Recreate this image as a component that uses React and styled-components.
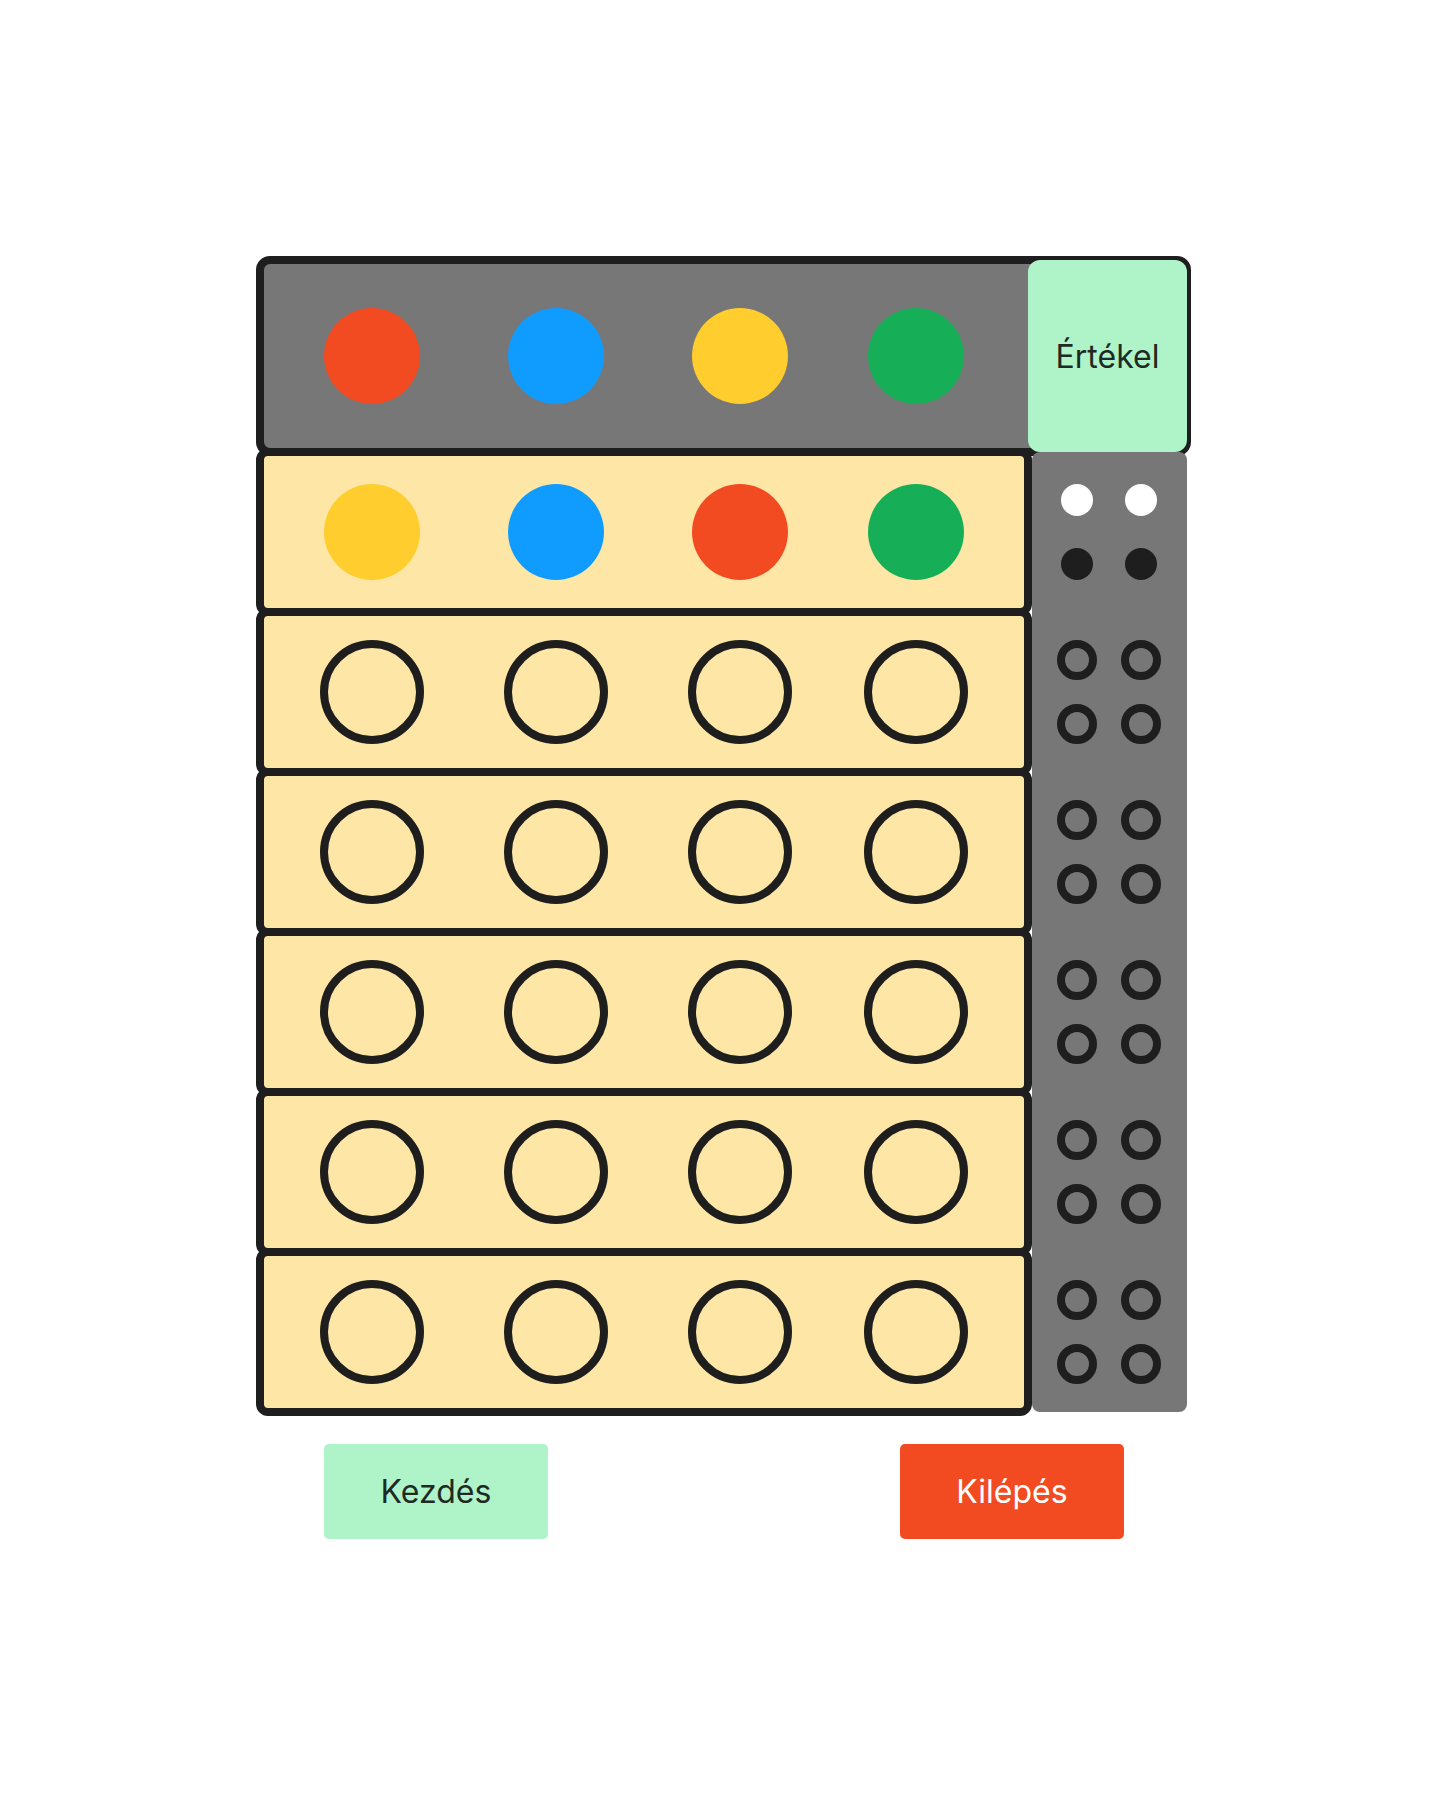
import React from 'react';
import styled, { createGlobalStyle } from 'styled-components';

const Global = createGlobalStyle`
  html, body { margin: 0; padding: 0; background: #ffffff; }
  body { font-family: Inter, "Noto Sans", "Liberation Sans", sans-serif; }
`;

const INK = '#1e1e1e';
const GRAY = '#777777';
const CREAM = '#fee7a6';
const MINT = '#aff4c8';

const Page = styled.div`
  display: flex;
  flex-direction: column;
  align-items: flex-start;
  padding: 256px 0 0 256px;
  min-height: 1796px;
  box-sizing: border-box;
`;

const Board = styled.div`
  width: 935px;
  display: flex;
  flex-direction: column;
`;

const TopBar = styled.div`
  height: 200px;
  box-sizing: border-box;
  border: 8px solid ${INK};
  border-radius: 14px;
  background: ${GRAY};
  display: flex;
  align-items: center;
`;

const PegRow = styled.div`
  display: grid;
  grid-template-columns: 184px 184px 176px 104px;
  padding-left: 56px;
  align-items: center;
`;

const Slot = styled.div`
  width: 104px;
  height: 104px;
  display: flex;
  align-items: center;
  justify-content: center;
`;

const CodePeg = styled.div`
  width: 96px;
  height: 96px;
  border-radius: 50%;
  background: ${(p) => p.$color};
`;

const EmptyPeg = styled.div`
  width: 104px;
  height: 104px;
  box-sizing: border-box;
  border: 8px solid ${INK};
  border-radius: 50%;
`;

const EvalButton = styled.button`
  align-self: stretch;
  margin: -4px -4px -4px auto;
  width: 159px;
  border: none;
  border-radius: 12px;
  background: ${MINT};
  color: #1f2a24;
  font-family: Inter, "Noto Sans", sans-serif;
  font-size: 32px;
  font-weight: 400;
  padding: 0;
  cursor: pointer;
`;

const Lower = styled.div`
  display: grid;
  grid-template-columns: 776px 155px;
  margin-top: -8px;
  align-items: start;
`;

const Rows = styled.div`
  display: flex;
  flex-direction: column;
`;

const Row = styled.div`
  height: 168px;
  box-sizing: border-box;
  border: 8px solid ${INK};
  border-radius: 12px;
  background: ${CREAM};
  display: flex;
  align-items: center;
  & + & {
    margin-top: -8px;
  }
`;

const Feedback = styled.div`
  margin-top: 4px;
  background: ${GRAY};
  border-radius: 8px;
  display: grid;
  grid-template-rows: repeat(6, 160px);
`;

const FeedbackCell = styled.div`
  display: grid;
  grid-template-columns: 40px 40px;
  grid-template-rows: 40px 40px;
  gap: 24px;
  align-content: center;
  justify-content: center;
  padding-right: 2px;
`;

const KeySlot = styled.div`
  width: 40px;
  height: 40px;
  display: flex;
  align-items: center;
  justify-content: center;
`;

const KeyPeg = styled.div`
  width: 32px;
  height: 32px;
  border-radius: 50%;
  background: ${(p) => p.$color};
`;

const KeyHole = styled.div`
  width: 40px;
  height: 40px;
  box-sizing: border-box;
  border: 8px solid ${INK};
  border-radius: 50%;
`;

const Actions = styled.div`
  width: 935px;
  box-sizing: border-box;
  display: flex;
  justify-content: space-between;
  padding: 0 67px 0 68px;
  margin-top: 28px;
`;

const ActionButton = styled.button`
  width: 224px;
  height: 95px;
  border: none;
  border-radius: 5px;
  background: ${(p) => p.$bg};
  color: ${(p) => p.$fg};
  font-family: Inter, "Noto Sans", sans-serif;
  font-size: 32px;
  font-weight: 400;
  padding: 0;
  cursor: pointer;
`;

const RED = '#f24b22';
const BLUE = '#109cff';
const YELLOW = '#ffcd2d';
const GREEN = '#17ae58';

const secret = [RED, BLUE, YELLOW, GREEN];
const guesses = [
  [YELLOW, BLUE, RED, GREEN],
  null,
  null,
  null,
  null,
  null,
];
const keys = [
  ['#ffffff', '#ffffff', INK, INK],
  null,
  null,
  null,
  null,
  null,
];

export default function App() {
  return (
    <Page>
      <Global />
      <Board>
        <TopBar>
          <PegRow>
            {secret.map((c, i) => (
              <Slot key={i}>
                <CodePeg $color={c} />
              </Slot>
            ))}
          </PegRow>
          <EvalButton>Értékel</EvalButton>
        </TopBar>
        <Lower>
          <Rows>
            {guesses.map((g, r) => (
              <Row key={r}>
                <PegRow>
                  {[0, 1, 2, 3].map((i) => (
                    <Slot key={i}>
                      {g ? <CodePeg $color={g[i]} /> : <EmptyPeg />}
                    </Slot>
                  ))}
                </PegRow>
              </Row>
            ))}
          </Rows>
          <Feedback>
            {keys.map((k, r) => (
              <FeedbackCell key={r}>
                {[0, 1, 2, 3].map((i) => (
                  <KeySlot key={i}>
                    {k ? <KeyPeg $color={k[i]} /> : <KeyHole />}
                  </KeySlot>
                ))}
              </FeedbackCell>
            ))}
          </Feedback>
        </Lower>
      </Board>
      <Actions>
        <ActionButton $bg={MINT} $fg="#1f2a24">Kezdés</ActionButton>
        <ActionButton $bg={RED} $fg="#ffffff">Kilépés</ActionButton>
      </Actions>
    </Page>
  );
}
